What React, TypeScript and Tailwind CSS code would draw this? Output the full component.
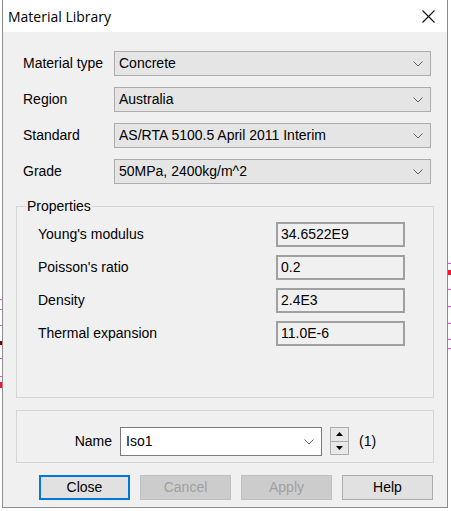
import React from "react";

const combos = [
  { label: "Material type", value: "Concrete" },
  { label: "Region", value: "Australia" },
  { label: "Standard", value: "AS/RTA 5100.5 April 2011 Interim" },
  { label: "Grade", value: "50MPa, 2400kg/m^2" },
];

const props = [
  { label: "Young's modulus", value: "34.6522E9" },
  { label: "Poisson's ratio", value: "0.2" },
  { label: "Density", value: "2.4E3" },
  { label: "Thermal expansion", value: "11.0E-6" },
];

// marks from the drawing behind the dialog
const leftMarks = [
  { y: 299, c: "bg-[#ff40ff]", h: 1 },
  { y: 309, c: "bg-[#ff40ff]", h: 1 },
  { y: 325, c: "bg-[#ff40ff]", h: 1 },
  { y: 341, c: "bg-[#800000]", h: 4 },
  { y: 358, c: "bg-[#ff40ff]", h: 1 },
  { y: 376, c: "bg-[#ff40ff]", h: 1 },
  { y: 382, c: "bg-[#ff1030]", h: 6 },
];
const rightMarks = [
  { y: 263, c: "bg-[#ff40ff]", h: 1 },
  { y: 270, c: "bg-[#ff1030]", h: 5 },
  { y: 289, c: "bg-[#ff40ff]", h: 1 },
  { y: 306, c: "bg-[#ff40ff]", h: 1 },
  { y: 323, c: "bg-[#ff40ff]", h: 1 },
  { y: 339, c: "bg-[#ff40ff]", h: 1 },
  { y: 348, c: "bg-[#ff40ff]", h: 1 },
];

function Chevron() {
  return (
    <svg width="10" height="6" viewBox="0 0 10 6" className="shrink-0">
      <path d="M0.5 0.5 L5 5 L9.5 0.5" fill="none" stroke="#606060" strokeWidth="1" />
    </svg>
  );
}

function Button({ label, primary, disabled }: { label: string; primary?: boolean; disabled?: boolean }) {
  return (
    <div
      className={
        "flex h-[25px] w-[91px] items-center justify-center text-[14px] " +
        (primary
          ? "border-2 border-[#0078d7] bg-[#e1e1e1] text-black"
          : disabled
          ? "border border-[#bfbfbf] bg-[#cccccc] text-[#a0a0a0]"
          : "border border-[#adadad] bg-[#e1e1e1] text-black")
      }
    >
      {label}
    </div>
  );
}

export default function App() {
  return (
    <div className="relative h-[511px] w-[451px] overflow-hidden bg-white font-['Liberation_Sans',Arial,sans-serif]">
      {leftMarks.map((m) => (
        <div
          key={"l" + m.y}
          className={`absolute left-0 w-[2px] ${m.c}`}
          style={{ top: m.y, height: m.h }}
        />
      ))}
      {rightMarks.map((m) => (
        <div
          key={"r" + m.y}
          className={`absolute right-0 w-[3px] ${m.c}`}
          style={{ top: m.y, height: m.h }}
        />
      ))}

      <div className="ml-[2px] flex h-[508px] w-[446px] flex-col border-x border-b border-[#8c8c8c] bg-[#f0f0f0]">
        {/* title bar */}
        <div className="flex h-[32px] shrink-0 items-center justify-between bg-white pl-[5px] pr-[12px]">
          <span className="font-['Open_Sans',sans-serif] text-[14px] text-black">Material Library</span>
          <svg width="13" height="13" viewBox="0 0 13 13">
            <path d="M0.5 0.5 L12.5 12.5 M12.5 0.5 L0.5 12.5" stroke="#111" strokeWidth="1.1" />
          </svg>
        </div>

        <div className="flex flex-col px-[13px] pt-[19px]">
          {/* combos */}
          <div className="flex flex-col gap-[11px] pl-[7px]">
            {combos.map((c) => (
              <div key={c.label} className="flex items-center">
                <span className="w-[91px] text-[14px] text-black">{c.label}</span>
                <div className="flex h-[25px] w-[317px] items-center justify-between border border-[#acacac] bg-[#e5e5e5] pl-[4px] pr-[7px]">
                  <span className="text-[14px] text-black">{c.value}</span>
                  <Chevron />
                </div>
              </div>
            ))}
          </div>

          {/* properties */}
          <fieldset className="mt-[14px] h-[200px] w-[418px] border border-[#d5d5d5] pt-[8px]">
            <legend className="ml-[9px] px-[1px] text-[14px] leading-[16px] text-black">Properties</legend>
            <div className="flex flex-col gap-[8px] pl-[21px]">
              {props.map((p) => (
                <div key={p.label} className="flex items-center">
                  <span className="w-[238px] text-[14px] text-black">{p.label}</span>
                  <div className="flex h-[25px] w-[129px] items-center border-2 border-[#a0a0a0] bg-[#f0f0f0] pl-[3px] text-[14px] text-black">
                    {p.value}
                  </div>
                </div>
              ))}
            </div>
          </fieldset>

          {/* name */}
          <div className="mt-[12px] flex h-[53px] w-[418px] items-start border border-[#d5d5d5] pt-[16px]">
            <span className="flex h-[29px] w-[95px] items-center justify-end text-[14px] text-black">Name</span>
            <div className="ml-[8px] flex h-[29px] w-[202px] items-center justify-between border border-[#7a7a7a] bg-white pl-[5px] pr-[7px]">
              <span className="text-[14px] text-black">Iso1</span>
              <Chevron />
            </div>
            <div className="ml-[8px] flex h-[28px] w-[19px] flex-col border border-[#adadad] bg-[#e8e8e8]">
              <div className="flex flex-1 items-center justify-center border-b border-[#adadad]">
                <svg width="7" height="4" viewBox="0 0 7 4">
                  <path d="M3.5 0 L7 4 L0 4 Z" fill="#000" />
                </svg>
              </div>
              <div className="flex flex-1 items-center justify-center">
                <svg width="7" height="4" viewBox="0 0 7 4">
                  <path d="M0 0 L7 0 L3.5 4 Z" fill="#000" />
                </svg>
              </div>
            </div>
            <span className="ml-[10px] flex h-[29px] items-center text-[14px] text-black">(1)</span>
          </div>

          {/* buttons */}
          <div className="ml-[23px] mt-[12px] flex gap-[10px]">
            <Button label="Close" primary />
            <Button label="Cancel" disabled />
            <Button label="Apply" disabled />
            <Button label="Help" />
          </div>
        </div>
      </div>
    </div>
  );
}
